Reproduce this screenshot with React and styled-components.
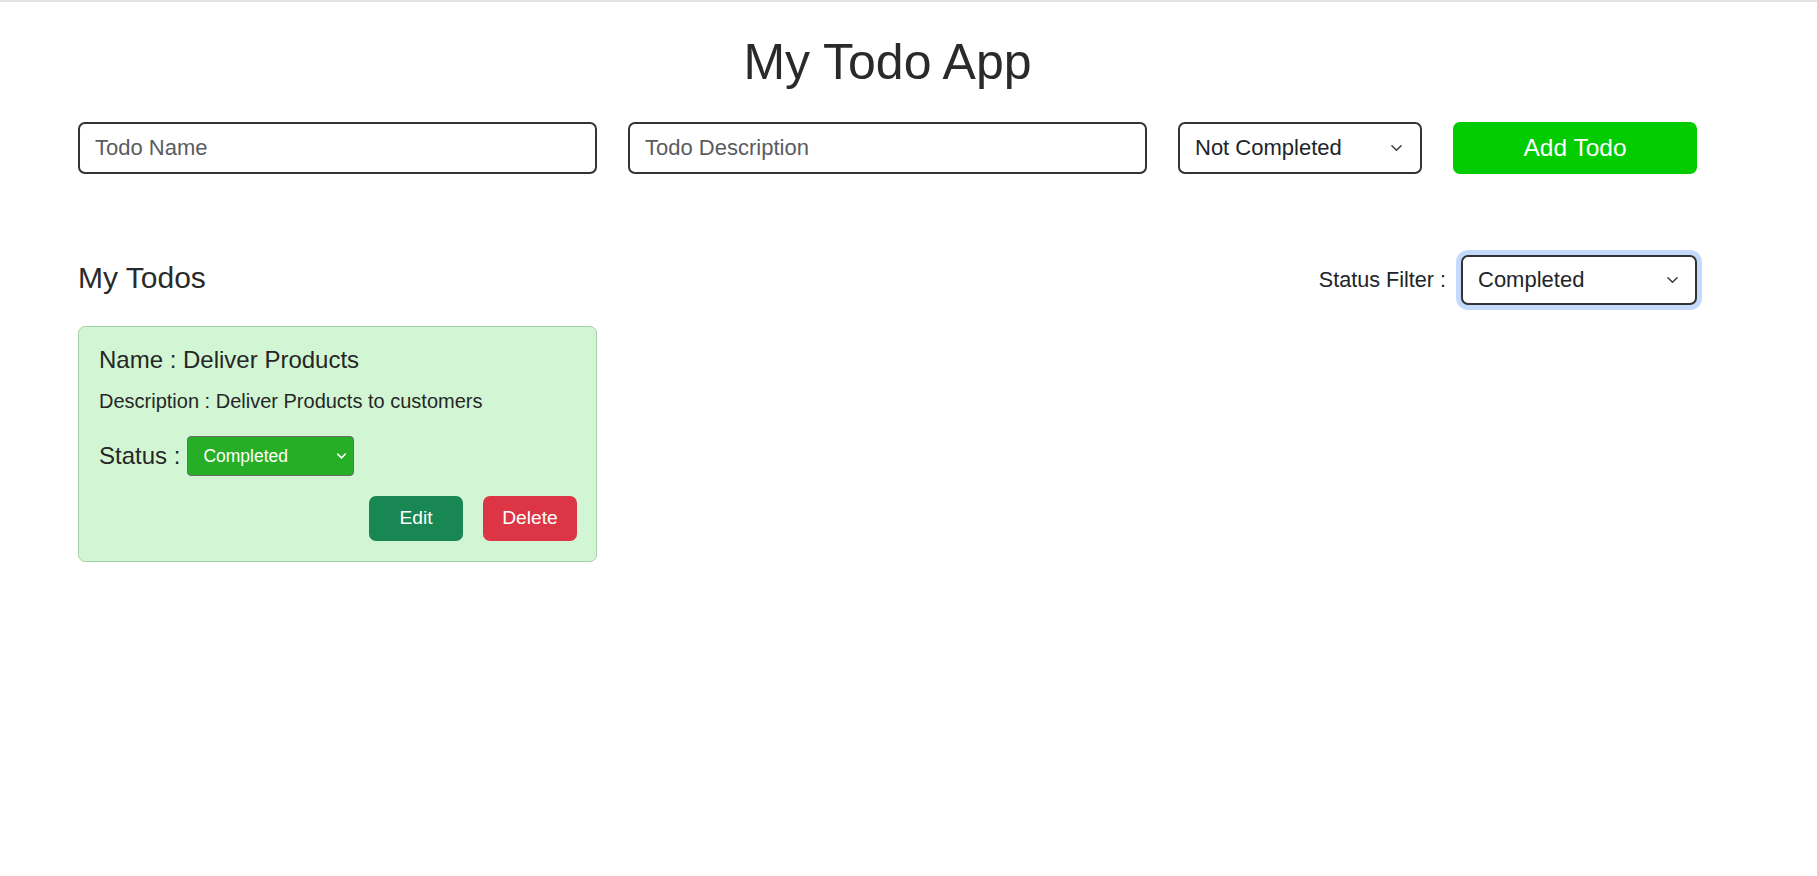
import React from 'react';
import styled, { createGlobalStyle } from 'styled-components';

const GlobalStyle = createGlobalStyle`
  html, body { margin: 0; padding: 0; background: #ffffff; }
  body {
    font-family: "Liberation Sans", Arial, sans-serif;
    color: #212529;
  }
  *, *::before, *::after { box-sizing: border-box; }
`;

const Page = styled.div`
  border-top: 2px solid #e4e4e4;
  min-height: 876px;
`;

const Container = styled.main`
  width: 1619px;
  margin-left: 78px;
  padding-top: 29.7px;
`;

const Title = styled.h1`
  margin: 0 0 30.3px;
  font-size: 50px;
  line-height: 60px;
  font-weight: 400;
  text-align: center;
  color: #2a2a2a;
`;

const FormRow = styled.form`
  display: grid;
  grid-template-columns: 519px 519px 244px 244px;
  column-gap: 31px;
  margin: 0;
`;

const TextInput = styled.input`
  height: 52px;
  width: 100%;
  border: 2px solid #333333;
  border-radius: 7px;
  padding: 0 15px;
  font-family: inherit;
  font-size: 22px;
  color: #212529;
  background: #fff;
  outline: none;
  &::placeholder { color: #595c5f; }
`;

const SelectWrap = styled.div`
  position: relative;
  width: ${p => p.$width || '100%'};
  height: ${p => p.$height || '52px'};
`;

const Select = styled.select`
  appearance: none;
  -webkit-appearance: none;
  width: 100%;
  height: 100%;
  border: 2px solid #333333;
  border-radius: 7px;
  padding: 0 40px 0 15px;
  font-family: inherit;
  font-size: 22px;
  color: #212529;
  background: #fff;
  outline: none;
  box-shadow: ${p => (p.$focused ? '0 0 0 5px #c3dafd' : 'none')};
`;

const SmallSelect = styled.select`
  appearance: none;
  -webkit-appearance: none;
  width: 100%;
  height: 100%;
  border: 1px solid #6a6a6a;
  border-radius: 4px;
  padding: 0 28px 0 15px;
  font-family: inherit;
  font-size: 17.5px;
  color: #ffffff;
  background: #26ae27;
  outline: none;
`;

const Chevron = styled.svg`
  position: absolute;
  top: 50%;
  right: ${p => p.$right}px;
  transform: translateY(-50%);
  pointer-events: none;
`;

const AddButton = styled.button`
  height: 52px;
  border: none;
  border-radius: 7px;
  background: #00cc00;
  color: #ffffff;
  font-family: inherit;
  font-size: 24.5px;
  cursor: pointer;
`;

const HeaderRow = styled.div`
  margin-top: 81px;
  height: 50px;
  display: flex;
  align-items: center;
  justify-content: space-between;
`;

const SectionTitle = styled.h4`
  margin: 0 0 4px;
  font-size: 30px;
  line-height: 1.2;
  font-weight: 400;
  color: #2a2a2a;
`;

const FilterGroup = styled.div`
  display: flex;
  align-items: center;
  gap: 15px;
`;

const FilterLabel = styled.label`
  font-size: 21.6px;
  color: #212529;
`;

const Card = styled.div`
  margin-top: 21px;
  width: 519px;
  background: #d2f6d4;
  border: 1px solid #a8d2aa;
  border-radius: 7px;
  padding: 19px 19px 20px 20px;
`;

const CardName = styled.h5`
  margin: 0 0 11px;
  font-size: 24px;
  line-height: 28.8px;
  font-weight: 400;
  color: #262626;
`;

const CardDesc = styled.p`
  margin: 0 0 20px;
  font-size: 20px;
  line-height: 30px;
  color: #262626;
`;

const StatusRow = styled.div`
  display: flex;
  align-items: center;
  gap: 7px;
  margin-bottom: 20px;
`;

const StatusLabel = styled.span`
  font-size: 24px;
  color: #262626;
`;

const Actions = styled.div`
  display: flex;
  justify-content: flex-end;
  gap: 20px;
`;

const ActionButton = styled.button`
  width: 94px;
  height: 45px;
  border: none;
  border-radius: 7px;
  background: ${p => (p.$variant === 'danger' ? '#dc3545' : '#198754')};
  color: #ffffff;
  font-family: inherit;
  font-size: 19.2px;
  cursor: pointer;
`;

const ChevronIcon = ({ right, color = '#343a40', w = 11, h = 7, sw = 1.6 }) => (
  <Chevron $right={right} width={w} height={h} viewBox="0 0 12 7" fill="none">
    <path d="M1 1l5 5 5-5" stroke={color} strokeWidth={sw} strokeLinecap="round" strokeLinejoin="round" />
  </Chevron>
);

export default function App() {
  return (
    <Page>
      <GlobalStyle />
      <Container>
        <Title>My Todo App</Title>
        <FormRow onSubmit={e => e.preventDefault()}>
          <TextInput placeholder="Todo Name" />
          <TextInput placeholder="Todo Description" />
          <SelectWrap>
            <Select defaultValue="notcompleted">
              <option value="notcompleted">Not Completed</option>
              <option value="completed">Completed</option>
            </Select>
            <ChevronIcon right={20} />
          </SelectWrap>
          <AddButton type="submit">Add Todo</AddButton>
        </FormRow>

        <HeaderRow>
          <SectionTitle>My Todos</SectionTitle>
          <FilterGroup>
            <FilterLabel>Status Filter :</FilterLabel>
            <SelectWrap $width="236px" $height="50px">
              <Select $focused defaultValue="completed">
                <option value="all">All</option>
                <option value="completed">Completed</option>
                <option value="notcompleted">Not Completed</option>
              </Select>
              <ChevronIcon right={19} />
            </SelectWrap>
          </FilterGroup>
        </HeaderRow>

        <Card>
          <CardName>Name : Deliver Products</CardName>
          <CardDesc>Description : Deliver Products to customers</CardDesc>
          <StatusRow>
            <StatusLabel>Status :</StatusLabel>
            <SelectWrap $width="167px" $height="40px">
              <SmallSelect defaultValue="completed">
                <option value="completed">Completed</option>
                <option value="notcompleted">Not Completed</option>
              </SmallSelect>
              <ChevronIcon right={8} color="#ffffff" w={9} h={6} sw={2} />
            </SelectWrap>
          </StatusRow>
          <Actions>
            <ActionButton>Edit</ActionButton>
            <ActionButton $variant="danger">Delete</ActionButton>
          </Actions>
        </Card>
      </Container>
    </Page>
  );
}
